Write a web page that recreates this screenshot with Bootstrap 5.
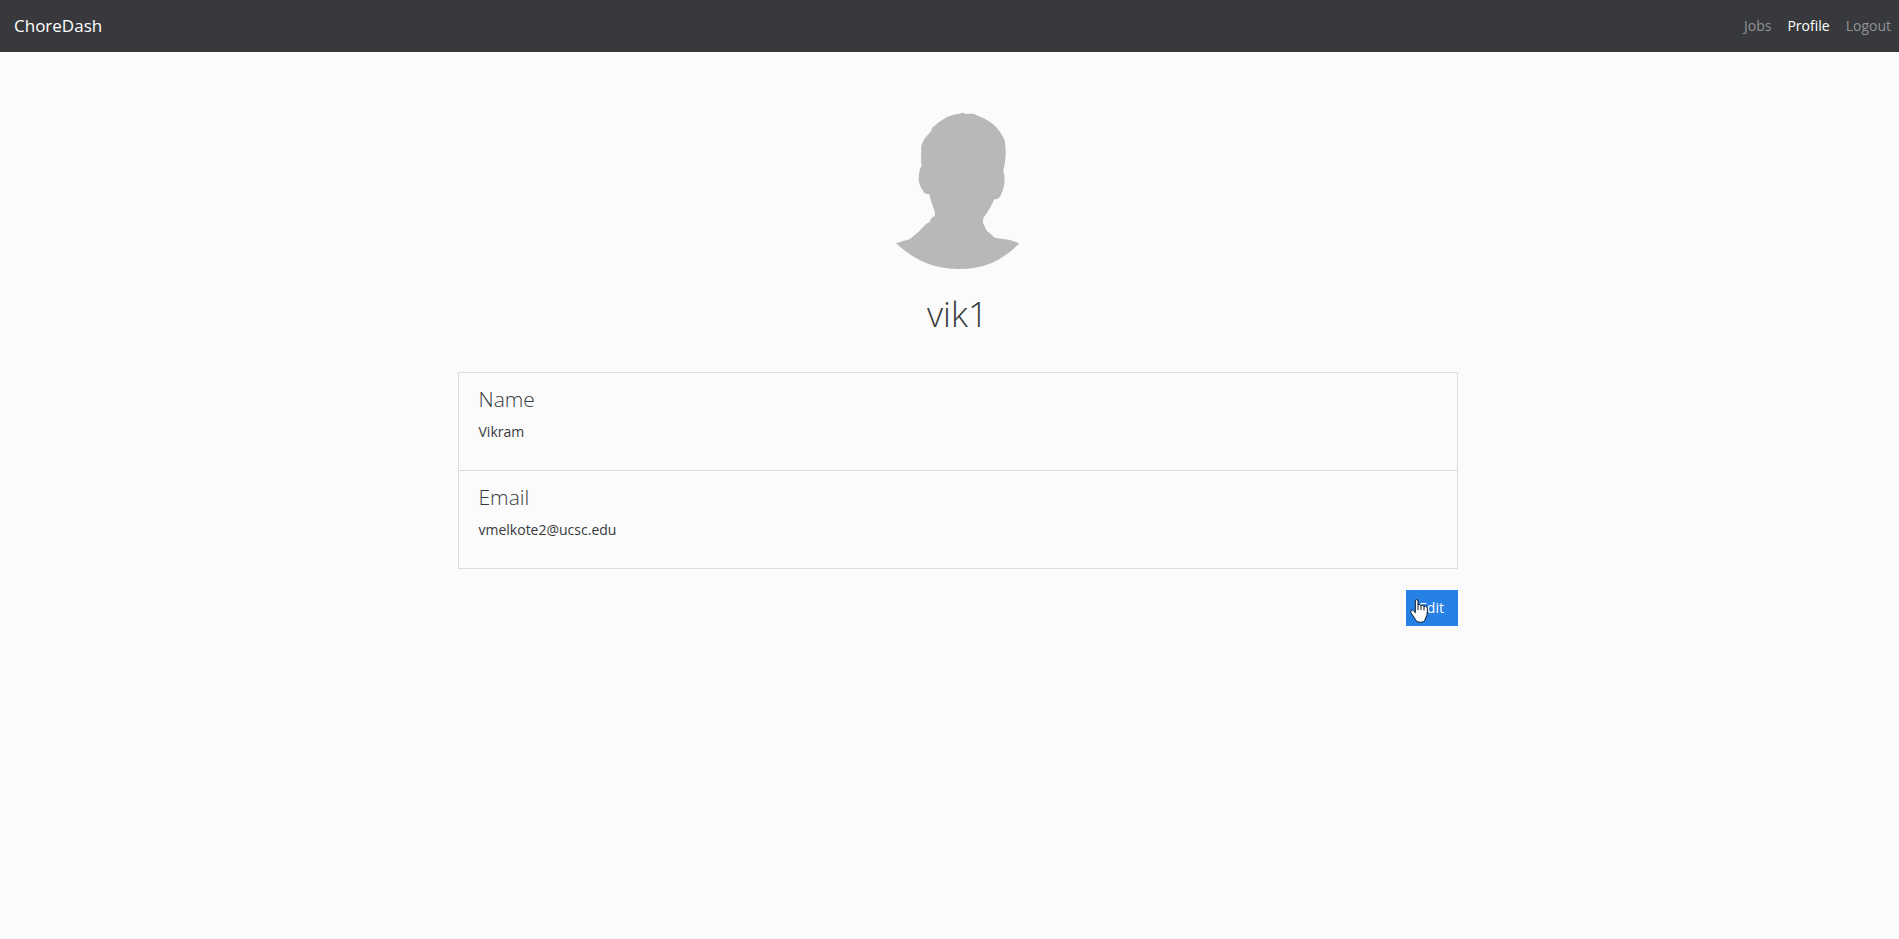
<!DOCTYPE html>
<html lang="en">
<head>
<meta charset="utf-8">
<meta name="viewport" content="width=device-width, initial-scale=1">
<title>ChoreDash - Profile</title>
<link href="https://cdn.jsdelivr.net/npm/bootstrap@5.3.0/dist/css/bootstrap.min.css" rel="stylesheet">
<style>
  body { font-family: "Open Sans", "Noto Sans", sans-serif; font-size: 14px; line-height: 24px; color: #373a3c; background: #fbfbfb; }
  .topbar { background: #38393d; min-height: 52px; }
  .topbar .container-fluid { padding-left: 14px; }
  .topbar .navbar-brand { font-size: 17px; color: #fff; }
  .topbar .nav-link { color: #919295; }
  .topbar .nav-link.active { color: #fff; }
  .profile { max-width: 1000px; }
  .profile-head { padding: 60px 0 36px; }
  .avatar { width: 124px; height: 158px; fill: #b8b8b8; }
  .profile h1 { font-size: 35px; line-height: 44px; font-weight: 300; margin: 22px 0 0; }
  .profile h2 { font-size: 21px; line-height: 26px; font-weight: 300; }
  .details { --bs-list-group-bg: transparent; --bs-list-group-color: #373a3c; --bs-list-group-border-color: #dddddd; --bs-list-group-border-radius: 0; }
  .details .list-group-item { padding: 13px 20px 26px; }
  .actions { margin-top: 21px; }
  .btn-edit { --bs-btn-bg: #2780e3; --bs-btn-color: #fff; --bs-btn-hover-bg: #1f6dc4; --bs-btn-hover-color: #fff; --bs-btn-border-radius: 0; --bs-btn-border-width: 0; --bs-btn-padding-x: 13px; --bs-btn-padding-y: 6px; --bs-btn-font-size: 14px; --bs-btn-line-height: 24px; min-width: 52px; }
  .pointer { left: 4px; top: 9px; width: 18px; height: 24px; pointer-events: none; }
</style>
</head>
<body>
<nav class="navbar navbar-expand topbar py-0">
  <div class="container-fluid pe-0">
    <a class="navbar-brand" href="#">ChoreDash</a>
    <div class="navbar-nav">
      <a class="nav-link" href="#">Jobs</a>
      <a class="nav-link active" aria-current="page" href="#">Profile</a>
      <a class="nav-link" href="#">Logout</a>
    </div>
  </div>
</nav>
<div class="ps-3">
  <main class="profile mx-auto">
    <header class="profile-head text-center">
      <svg class="avatar d-block mx-auto" viewBox="48 36 372 474" role="img" aria-label="Profile picture">
        <path d="M48 430L90 417Q116 397 139 371L148 367L155 353L165 347L164 333Q154 310 148 283L141 282Q133 282 129 273Q116 253 116 238Q116 212 125 196Q122 188 124 177L123 172L124 150Q122 138 128 126L131 124L131 119L154 92L156 84Q178 63 201 51Q224 42 240 41L246 38L256 41L281 41L297 49Q329 61 349 82Q363 97 374 120Q377 140 377 160Q376 190 370 210L374 234Q374 265 360 290Q354 298 343 298Q334 319 322 337L310 354L309 369L320 392L331 401L344 413L390 420L418 430Q381 468 337 488Q289 508 233 507Q178 507 131 486Q86 466 48 430Z"/>
      </svg>
      <h1>vik1</h1>
    </header>
    <ul class="list-group details">
      <li class="list-group-item"><h2>Name</h2><p class="mb-0">Vikram</p></li>
      <li class="list-group-item"><h2>Email</h2><p class="mb-0">vmelkote2@ucsc.edu</p></li>
    </ul>
    <div class="actions d-flex justify-content-end">
      <div class="position-relative">
        <button type="button" class="btn btn-edit">Edit</button>
        <svg class="pointer position-absolute" viewBox="0 0 54 72" aria-hidden="true">
          <path d="M16 41V6Q16 2 20 2Q24 2 24 6V18Q26 15 30 17L32 20Q36 16 40 20L42 23Q47 19 51 24Q53 27 52 38Q52 50 47 57Q45 66 40 68Q32 72 22 68Q17 65 14 58L4 43Q0 36 4 34Q8 32 11 36Z" fill="#fff" stroke="#111a28" stroke-width="3" stroke-linejoin="round"/>
          <path d="M24 18V32M33 20V32M42 23V33" fill="none" stroke="#111a28" stroke-width="3" stroke-linecap="round"/>
        </svg>
      </div>
    </div>
  </main>
</div>
<script src="https://cdn.jsdelivr.net/npm/bootstrap@5.3.0/dist/js/bootstrap.bundle.min.js"></script>
</body>
</html>
